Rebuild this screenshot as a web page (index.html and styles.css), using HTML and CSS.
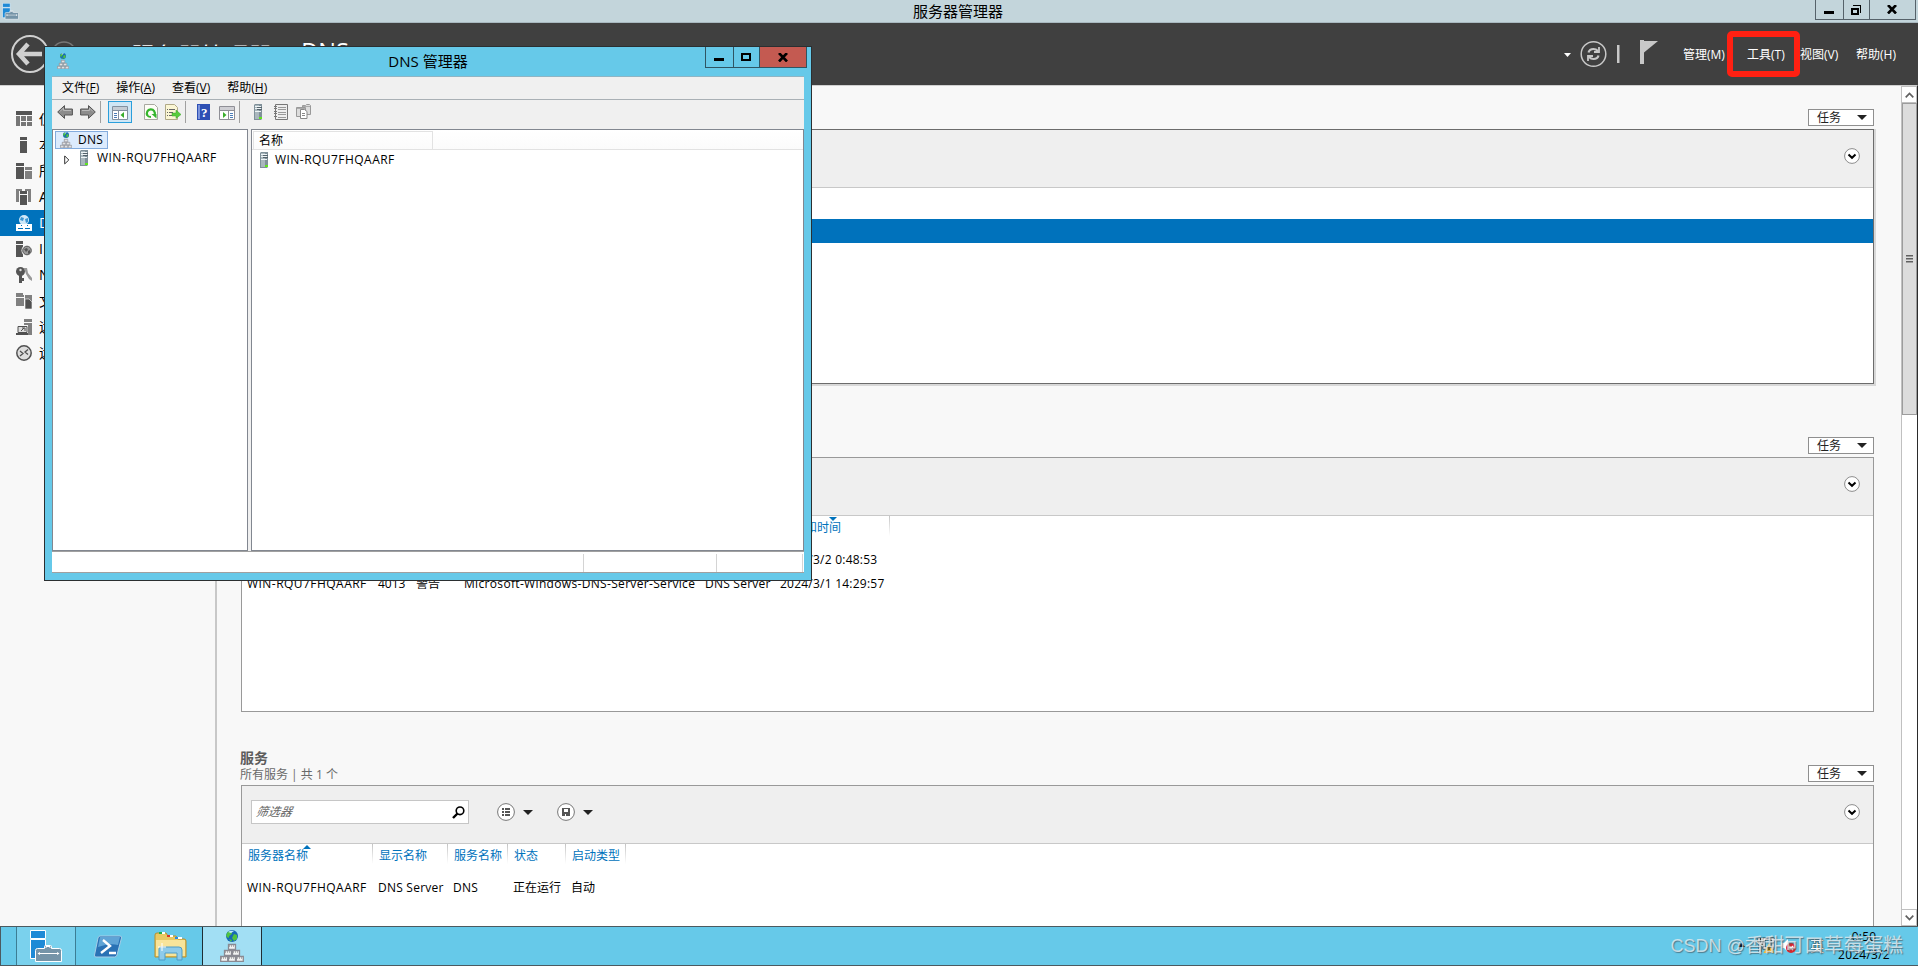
FILE: index.html
```
<!DOCTYPE html>
<html lang="zh-CN">
<head>
  <meta charset="UTF-8">
  <meta name="viewport" content="width=device-width, initial-scale=1.0">
  <link rel="stylesheet" href="styles.css">
  <title>服务器管理器</title>
</head>
<body>
  <!-- 公用图标 -->
  <svg class="defs" width="0" height="0">
    <symbol id="server" viewBox="0 0 9 16">
      <path d="M0 1 1 0h7v15l-1 1H0z" fill="#7f9099"/>
      <path d="M1 1h4v14H1z" fill="#a9b7bd"/>
      <path d="M1 2h6v1H1zM1 4h6v1H1zM1 7h6v1H1z" fill="#eef4f6"/>
      <path d="M3 3h5v1H3zM3 5h5v1H3z" fill="#54636c"/>
      <path d="M5 13h3v2H5z" fill="#5fe51c"/>
    </symbol>
    <symbol id="dns" viewBox="0 0 24 32">
      <circle cx="12" cy="6" r="6" fill="#1769b5"/>
      <path d="M7 3c3-3 5-2 5 0s-3 2-3 4-2 0-3-1zM14 4l3 1v4l-3 2-2-3zM9 9l3 1-1 2z" fill="#4fc33f"/>
      <path d="M8 2q3-2 6-1l-3 2z" fill="#bfe8ff"/>
      <g fill="#f2f2f2" stroke="#8a8a92" stroke-width="1.3">
        <path d="M8.500 14.500h7v5h-7zM4.500 20.500h7v5h-7zM12.500 20.500h7v5h-7zM.7 26.500h7v5h-7zM8.500 26.500h7v5h-7zM16.300 26.500h7v5h-7z"/>
      </g>
      <path d="M9 16h6M5 22h6M13 22h6M1 28h6M9 28h6M17 28h6" stroke="#777" stroke-dasharray="1 1"/>
    </symbol>
    <symbol id="arrow" viewBox="0 0 16 14">
      <path d="M.7 7 7.500.6v3.400H15.400v6H7.500v3.400z" fill="#8c8c8c" stroke="#555"/>
      <path d="M3 6.500 6.500 3v2.500H14" fill="none" stroke="#b9b9b9"/>
    </symbol>
    <symbol id="manager" viewBox="0 0 32 33">
      <path d="M.5.5h15v8H.5zM.5 9.500h15v19H.5z" fill="#1e8ad6" stroke="#fff"/>
      <path d="M5.500 20.500q0-2 2-2h7v-2q0-1 1-1h5q1 0 1 1v2h8q2 0 2 2v11h-26z" fill="#7594a8" stroke="#fff"/>
      <path d="M16 18v-1.500h4V18" fill="none" stroke="#fff"/>
      <path d="M8 23.500h21" stroke="#fff"/>
      <path d="M10 22l-2.500 1.500L10 25zM27 22l2.500 1.500L27 25z" fill="#fff"/>
    </symbol>
    <symbol id="chevron" viewBox="0 0 16 16">
      <circle cx="8" cy="8" r="7.400" fill="#fff" stroke="#8c8c8c"/>
      <path d="M4.500 6.500 8 9.800l3.500-3.300" fill="none" stroke="#000" stroke-width="2"/>
    </symbol>
  </svg>

  <div class="desktop">
    <!-- 标题栏 -->
    <div class="titlebar">
      <svg class="app-icon" width="17" height="17"><use href="#manager"/></svg>
      <div class="title">服务器管理器</div>
      <div class="caption">
        <div class="cap min"><svg width="10" height="10"><path d="M0 6h10v3H0z"/></svg></div>
        <div class="cap max"><svg width="10" height="10"><path d="M2 0h8v8H9V1H2zM0 3h8v7H0zm2 2v3h4V5z" fill-rule="evenodd"/></svg></div>
        <div class="cap close"><svg width="10" height="9"><path d="M1 0 9 8.500M9 0 1 8.500" stroke="#000" stroke-width="2.600"/></svg></div>
      </div>
    </div>

    <!-- 导航栏 -->
    <div class="navbar">
      <svg class="nav-arrows" width="70" height="40">
        <circle cx="20" cy="20" r="18" fill="none" stroke="#d0d0d0" stroke-width="2"/>
        <path d="M9 20h23M18 10 9 20l9 10" fill="none" stroke="#d0d0d0" stroke-width="4.500"/>
        <circle cx="54" cy="20" r="12" fill="none" stroke="#777" stroke-width="1.500"/>
      </svg>
      <h1>服务器管理器<span>· DNS</span></h1>
      <div class="nav-right">
        <svg width="100" height="40">
          <path d="M0 19h7l-3.500 4z" fill="#fff"/>
          <circle cx="29.500" cy="20" r="12.300" fill="none" stroke="#c8c8c8" stroke-width="1.500"/>
          <g fill="none" stroke="#c8c8c8" stroke-width="2.200">
            <path d="M24.500 18.500q1-3.500 5-3.500 2.500 0 4.500 2M34.500 21.500q-1 3.500-5 3.500-2.500 0-4.500-2"/>
            <path d="M35 13v5h-5M24 27v-5h5" stroke-width="1.800"/>
          </g>
          <path d="M53 11h2.500v18H53zM76 6h4v24h-4z" fill="#c8c8c8"/>
          <path d="M80 7h14L80 18.500z" fill="#c8c8c8"/>
        </svg>
        <span class="m1">管理(M)</span>
        <span class="m2">工具(T)</span>
        <span class="m3">视图(V)</span>
        <span class="m4">帮助(H)</span>
      </div>
    </div>

    <div class="body">
      <!-- 左侧菜单 -->
      <div class="sidebar">
        <div class="item"><svg width="16" height="16"><path d="M0 0h16v4H0z" fill="#555"/><path d="M0 5h4v10H0zM5 5h5v5H5zM11 5h5v5h-5zM5 11h5v4H5zM11 11h5v4h-5z" fill="#777"/></svg>仪表板</div>
        <div class="item"><svg width="16" height="16"><path d="M4 0h7v3H4zM4 4h7v12H4z" fill="#555"/></svg>本地服务器</div>
        <div class="item"><svg width="16" height="16"><path d="M0 0h8v3H0zM0 4h8v12H0z" fill="#555"/><path d="M9 4h7v3H9zM9 8h7v8H9z" fill="#808080"/></svg>所有服务器</div>
        <div class="item"><svg width="16" height="16"><path d="M0 0h6v2H3v11H0zM9 0h6v13h-3V2H9z" fill="#808080"/><path d="M4 2h7v3H4zM4 6h7v10H4z" fill="#555"/></svg>AD DS</div>
        <div class="item selected"><svg width="16" height="16"><circle cx="8" cy="5" r="5" fill="#cfe8f8"/><path d="M5 2l3 1-1 3-3-1zM9 4l3-1v4l-2 1z" fill="#3c96d2"/><path d="M0 9h16v7H0z" fill="#fff"/><path d="M2 13h5v1H2zM9 13h5v1H9zM5 10h1v1H5zM11 10h1v1h-1z" fill="#0070bb"/></svg>DNS</div>
        <div class="item"><svg width="16" height="16"><path d="M0 0h7v3H0zM0 4h7v12H0z" fill="#555"/><circle cx="11" cy="9.500" r="5.500" fill="#f8f8f8"/><circle cx="11" cy="9.500" r="4.300" fill="#999" stroke="#555"/><path d="M8 8l3-1 1 2-2 2zM12 10l2-1v3l-2 1z" fill="#555"/></svg>IIS</div>
        <div class="item"><svg width="16" height="16"><path d="M8 1h3l1 5 4 5v3l-3-2-3-5z" fill="#999"/><circle cx="4.500" cy="4.500" r="4.500" fill="#555"/><path d="M3 8h3v8H3zM6 11h2v3H6z" fill="#555"/><circle cx="4.500" cy="3" r="1.200" fill="#ddd"/></svg>NAP</div>
        <div class="item"><svg width="16" height="16"><path d="M0 0h7v2h1v2H0zM0 5h8v8H0zM9 2h7v12H9z" fill="#808080"/><path d="M9 6h4l3 3v7H9z" fill="#505050" stroke="#f8f8f8" stroke-width=".6"/></svg>文件和存储服务</div>
        <div class="item"><svg width="16" height="16"><path d="M8 0h8v3H8zM12 4h4v12h-4zM8 4h4v2H8z" fill="#808080"/><path d="M2 7.500h9v6H2z" fill="#ddd" stroke="#505050"/><path d="M0 14h12v2H0z" fill="#505050"/><path d="M5 12l3-3M6 9h3v3" stroke="#505050" fill="none"/></svg>远程访问</div>
        <div class="item"><svg width="16" height="16"><circle cx="8" cy="8" r="7.200" fill="#ddd" stroke="#505050" stroke-width="1.500"/><path d="M4 6l3 2.500L4 11M12 4.500 9 7l3 2.500" fill="none" stroke="#505050" stroke-width="1.300"/></svg>远程桌面服务</div>
      </div>

      <!-- 主内容 -->
      <div class="main">
        <div class="section first">
          <div class="head">
            <div class="names"></div>
            <div class="tasks">任务<i></i></div>
          </div>
          <div class="panel active">
            <div class="filter"><svg class="expand" width="16" height="16"><use href="#chevron"/></svg></div>
            <div class="thead"></div>
            <div class="trow picked"></div>
          </div>
        </div>

        <div class="section">
          <div class="head">
            <div class="names"></div>
            <div class="tasks">任务<i></i></div>
          </div>
          <div class="panel">
            <div class="filter"><svg class="expand" width="16" height="16"><use href="#chevron"/></svg></div>
            <div class="thead events">
              <span>服务器名称</span><span>ID</span><span>严重性</span><span>源</span><span>日志</span><span class="desc">日期和时间</span>
            </div>
            <div class="trow events">
              <span class="name">WIN-RQU7FHQAARF</span><span>4013</span><span>警告</span><span class="src">Microsoft-Windows-DNS-Server-Service</span><span class="log">DNS Server</span><span class="date">2024/3/2 0:48:53</span>
            </div>
            <div class="trow events">
              <span class="name">WIN-RQU7FHQAARF</span><span>4013</span><span>警告</span><span class="src">Microsoft-Windows-DNS-Server-Service</span><span class="log">DNS Server</span><span class="date">2024/3/1 14:29:57</span>
            </div>
          </div>
        </div>

        <div class="section">
          <div class="head">
            <div class="names"><h2>服务</h2><p>所有服务 | 共 1 个</p></div>
            <div class="tasks">任务<i></i></div>
          </div>
          <div class="panel">
            <div class="filter">
              <div class="search">
                <em>筛选器</em>
                <svg width="13" height="13"><circle cx="8" cy="4.800" r="3.800" fill="none" stroke="#000" stroke-width="1.600"/><path d="M5.500 7.500 1 12" stroke="#000" stroke-width="2.400"/></svg>
              </div>
              <div class="tool">
                <svg width="18" height="18"><circle cx="9" cy="9" r="8.400" fill="#fff" stroke="#777"/><path d="M5 5h2v2H5zM8 5h5v2H8zM5 8h2v2H5zM8 8h5v2H8zM5 11h2v2H5zM8 11h5v2H8z" fill="#555"/></svg>
                <i></i>
              </div>
              <div class="tool">
                <svg width="18" height="18"><circle cx="9" cy="9" r="8.400" fill="#fff" stroke="#777"/><path d="M5 5h8v8H5z" fill="#555"/><path d="M7 6h4v3H7zM8 11h1v2H8z" fill="#fff"/></svg>
                <i></i>
              </div>
              <svg class="expand" width="16" height="16"><use href="#chevron"/></svg>
            </div>
            <div class="thead services">
              <span class="asc">服务器名称</span><span>显示名称</span><span>服务名称</span><span>状态</span><span>启动类型</span>
            </div>
            <div class="trow services">
              <span class="name">WIN-RQU7FHQAARF</span><span class="log">DNS Server</span><span class="log">DNS</span><span>正在运行</span><span>自动</span>
            </div>
          </div>
        </div>
      </div>

      <!-- 滚动条 -->
      <div class="scrollbar">
        <div class="sb-btn"><svg width="9" height="6"><path d="M.7 5.300 4.500 1.500l3.800 3.800" fill="none" stroke="#606060" stroke-width="1.700"/></svg></div>
        <div class="thumb"><svg width="7" height="8"><path d="M0 0h7v1.500H0zM0 3h7v1.500H0zM0 6h7v1.500H0z" fill="#606060"/></svg></div>
        <div class="sb-btn down"><svg width="9" height="6"><path d="M.7.7 4.500 4.500 8.300.7" fill="none" stroke="#606060" stroke-width="1.700"/></svg></div>
      </div>
    </div>

    <!-- 任务栏 -->
    <div class="taskbar">
      <div class="task open"><svg width="32" height="33"><use href="#manager"/></svg></div>
      <div class="task">
        <svg width="28" height="23">
          <path d="M6 1h20q2 0 1.500 2L23 20q-.5 2-2.500 2H2Q0 22 .5 20L4 3q.5-2 2-2z" fill="#2a72b5" stroke="#a7cde6"/>
          <path d="M6 2h20l-2 8q-9-2-20 2z" fill="#5fa4d6"/>
          <path d="M9 5l7 6-9 7M15 18h7" fill="none" stroke="#fff" stroke-width="2.400"/>
        </svg>
      </div>
      <div class="task">
        <svg width="33" height="30">
          <path d="M1 4q0-2 2-2h9l2 3h8l2 3h6q2 0 2 2v16H1z" fill="#e9c963" stroke="#b98f2d"/>
          <path d="M5 1h6v2H5zM13 4h6v2h-6zM21 6h7v2h-7z" fill="#fff"/>
          <path d="M5 1h3v2H5z" fill="#1fb04a"/><path d="M13 4h3v2h-3z" fill="#d93a2b"/><path d="M21 6h3v2h-3z" fill="#2b8de0"/>
          <path d="M2 9h29v16H2z" fill="#f8e49a"/>
          <path d="M5 18q0-2 2-2h18q3 0 3 3v10h-5v-7H11v7H5z" fill="#8ecbea" stroke="#4d9cc8"/>
          <path d="M8 12v8M4 16h8" stroke="#fff"/>
        </svg>
      </div>
      <div class="task current"><svg width="24" height="32"><use href="#dns"/></svg></div>
      <div class="tray">
        <svg width="84" height="20">
          <path d="M0 11h7l-3.500-4z"/>
          <g fill="none" stroke="#333" stroke-width="3"><path d="M26 3h9v9h-9zM21 2v5h3V2M22 7v9"/></g>
          <g fill="none" stroke="#fff" stroke-width="1.500"><path d="M26 3h9v9h-9zM21 2v5h3V2M22 7v9"/></g>
          <path d="M31 7l5.500 10h-11z" fill="#f5b82a"/><path d="M30.500 10h1v4h-1zM30.500 15h1v1h-1z"/>
          <path d="M43 7h3l4-4v13l-4-4h-3z" fill="#fff"/>
          <circle cx="53" cy="12" r="5" fill="#d8262c"/><path d="M51 10l4 4M55 10l-4 4" stroke="#fff" stroke-width="1.500"/>
        </svg>
        <span class="ime">英</span>
        <div class="clock">0:50<br>2024/3/2</div>
      </div>
    </div>

    <!-- DNS 管理器窗口 -->
    <div class="dns-window">
      <div class="dns-title">
        <svg class="dns-icon" width="12" height="16"><use href="#dns"/></svg>
        <div class="title">DNS 管理器</div>
        <div class="caption">
          <div class="cap min"><svg width="10" height="10"><path d="M0 6h10v3H0z"/></svg></div>
          <div class="cap max"><svg width="10" height="8"><path d="M0 0h10v8H0zm2 2v4h6V2z" fill-rule="evenodd"/></svg></div>
          <div class="cap close"><svg width="10" height="9"><path d="M1 0 9 8.500M9 0 1 8.500" stroke="#000" stroke-width="2.600"/></svg></div>
        </div>
      </div>
      <div class="dns-body">
        <div class="menu">
          <span>文件(<u>F</u>)</span><span>操作(<u>A</u>)</span><span>查看(<u>V</u>)</span><span>帮助(<u>H</u>)</span>
        </div>
        <div class="toolbar">
          <svg width="16" height="14"><use href="#arrow"/></svg>
          <svg class="flip" width="16" height="14"><use href="#arrow"/></svg>
          <b></b>
          <div class="pressed">
            <svg width="16" height="14"><path d="M.5.500h15v13H.5z" fill="#fff" stroke="#8290a0"/><path d="M1 1h14v3H1z" fill="#c5ccd4"/><path d="M1 4h14v1H1zM6 5h1v8H6z" fill="#8290a0"/><path d="M2 7.500h3M2 9.500h3M2 11.500h3" stroke="#4b7db8"/><path d="M12 6v6L8.500 9z" fill="#3aae2c"/></svg>
          </div>
          <svg class="g1" width="14" height="16"><path d="M.5.500h10l3 3v12H.5z" fill="#fdfdf6" stroke="#a8a8a0"/><path d="M3.500 11.500a4 4 0 1 1 7-.5" fill="none" stroke="#35b52c" stroke-width="2.200"/><path d="M7.500 10h5v4.500z" fill="#35b52c"/><path d="M3 11q1 2 4 2" fill="none" stroke="#35b52c" stroke-width="1.800"/></svg>
          <svg class="g2" width="16" height="16"><path d="M.5.500h9l3 3v12H.5z" fill="#fbf6d4" stroke="#b0a987"/><path d="M2 5.500h1M4 5.500h6M2 8.500h1M4 8.500h4M2 11.500h1M4 11.500h4" stroke="#666"/><path d="M7 9h4V6l5 4.500-5 4V12H7z" fill="#58cc3c" stroke="#3ba526" stroke-width=".5"/></svg>
          <b class="b2"></b>
          <svg class="g3" width="13" height="16"><path d="M0 0h13v16H0z" fill="#2d4fb4"/><path d="M1 1h2v14H1z" fill="#7c94dc"/><text x="4" y="13" class="help">?</text></svg>
          <svg class="g4" width="16" height="14"><path d="M.5.500h15v13H.5z" fill="#fff" stroke="#8f8f96"/><path d="M1 1h14v3H1z" fill="#cfcfd4"/><path d="M1 4h14v1H1zM9 5h1v8H9z" fill="#8f8f96"/><path d="M11 7.500h3M11 9.500h3M11 11.500h3" stroke="#4b7db8"/><path d="M4 6v6l3.500-3z" fill="#3aae2c"/></svg>
          <b class="b3"></b>
          <svg class="g5" width="9" height="16"><use href="#server"/></svg>
          <svg class="g6" width="14" height="16"><path d="M1.500.500h12v15h-12z" fill="#eee" stroke="#777"/><path d="M4 3.500h8M4 5.500h8M4 8.500h8M4 10.500h8M4 13.500h8" stroke="#999"/><path d="M0 2.500h3M0 4.500h3M0 7.500h3M0 9.500h3M0 12.500h3" stroke="#777"/></svg>
          <svg class="g7" width="15" height="16"><path d="M6.500 1.500h3l1-1h3l1 1v9h-8zM.500 3.500h9v9h-9z" fill="#dcdcdc" stroke="#999"/><path d="M1 4.500h8M7 2.500h7" stroke="#aaa"/><path d="M4.500 5.500h4l2.500 2v7H4.500z" fill="#fff" stroke="#888"/><path d="M6 9.500h3M6 11.500h3" stroke="#888"/></svg>
        </div>
        <div class="panes">
          <div class="tree">
            <div class="node root"><svg width="12" height="16"><use href="#dns"/></svg>DNS</div>
            <div class="node child"><svg class="tri" width="6" height="10"><path d="M.7.900v8L4.800 5z" fill="#fff" stroke="#333"/></svg><svg width="9" height="16"><use href="#server"/></svg><span class="name">WIN-RQU7FHQAARF</span></div>
          </div>
          <div class="list">
            <div class="list-head"><div>名称</div></div>
            <div class="list-row"><svg width="9" height="16"><use href="#server"/></svg><span class="name">WIN-RQU7FHQAARF</span></div>
          </div>
        </div>
        <div class="status"><div></div><div></div><div></div></div>
      </div>
    </div>

    <div class="red-box"></div>
    <div class="watermark"><span>CSDN @</span>香甜可口草莓蛋糕</div>
  </div>
</body>
</html>
```
FILE: styles.css
```
* {
  box-sizing: border-box;
}

body {
  margin: 0;
  font-family: "Open Sans", "Noto Sans CJK SC", sans-serif;
  font-size: 12px;
  line-height: 16px;
  color: #000;
}

svg {
  display: block;
  flex: none;
}

.defs {
  position: absolute;
}

.desktop {
  position: relative;
  display: flex;
  flex-direction: column;
  width: 1918px;
  height: 966px;
  overflow: hidden;
  background: #f8f8f8;
  white-space: nowrap;
}

/* 西文字距 */
.name {
  letter-spacing: 0.46px;
}

.src {
  letter-spacing: 0.33px;
}

.log,
.date {
  letter-spacing: 0.23px;
}

/* 标题栏 */
.titlebar {
  display: grid;
  grid-template-columns: 103px 1fr 103px;
  height: 23px;
  background: #c3d5db;
  border-bottom: 1px solid #a9b9c0;
}

.app-icon {
  margin: 3px 0 0 2px;
}

.title {
  font-size: 15px;
  line-height: 22px;
  text-align: center;
}

.titlebar .title {
  padding-right: 2px;
}

.caption {
  display: flex;
}

.cap {
  display: flex;
  align-items: center;
  justify-content: center;
  height: 20px;
  padding-right: 1px;
  border: 1px solid #56626a;
  border-top: none;
  border-left: none;
}

.cap.min {
  width: 29px;
  border-left: 1px solid #56626a;
}

.cap.max {
  width: 26px;
}

.cap.close {
  width: 46px;
}

/* 导航栏 */
.navbar {
  display: flex;
  align-items: center;
  height: 62px;
  background: #404040;
  color: #fff;
}

.nav-arrows {
  margin-left: 10px;
}

h1 {
  display: flex;
  gap: 13px;
  margin: 0 auto 0 51px;
  padding-top: 3px;
  font-size: 23.5px;
  line-height: 30px;
  font-weight: normal;
}

h1 span {
  margin-top: -5px;
  word-spacing: 4px;
}

.nav-right {
  display: flex;
  align-items: center;
  width: 354px;
}

.nav-right span {
  padding-top: 1px;
}

.m1 {
  margin-left: 19px;
  width: 64px;
}

.m2 {
  width: 53px;
}

.m3 {
  width: 56px;
}

/* 主体 */
.body {
  display: flex;
  height: 841px;
  border-top: 1px solid #d0d0d0;
  border-right: 1px solid #2b2b2b;
}

.sidebar {
  width: 217px;
  padding-top: 20px;
  border-right: 2px solid #c8c8c8;
}

.item {
  display: flex;
  align-items: center;
  gap: 7px;
  height: 26px;
  padding-left: 16px;
  font-size: 14px;
}

.item.selected {
  background: #0072bc;
  color: #fff;
}

.main {
  flex: 1;
  padding: 0 27px 0 24px;
  overflow: hidden;
}

.head {
  display: flex;
  align-items: flex-end;
  justify-content: space-between;
  height: 73px;
  margin-left: -1px;
}

.first .head {
  height: 43px;
}

.names {
  padding-bottom: 2px;
  color: #6a6a6a;
}

h2 {
  margin: 0;
  font-size: 14px;
  line-height: 18px;
  color: #5c5c5c;
}

p {
  margin: 0;
  line-height: 16px;
}

.tasks {
  display: flex;
  align-items: center;
  justify-content: space-between;
  width: 66px;
  height: 17px;
  margin-bottom: 3px;
  padding: 0 6px 0 8px;
  border: 1px solid #8f8f8f;
  background: #fff;
  color: #222;
}

.tasks i,
.tool i {
  border: 5px solid transparent;
  border-top-color: #222;
  border-bottom: none;
}

.panel {
  height: 255px;
  border: 1px solid #999;
  background: #fff;
}

.panel.active {
  border-color: #6c6c6c;
  box-shadow: 1px 1px 0 1px #d8d8d8;
}

.filter {
  display: flex;
  align-items: center;
  height: 58px;
  padding: 0 13px 5px 9px;
  background: #efefef;
  border-bottom: 1px solid #c8c8c8;
}

.search {
  display: flex;
  align-items: center;
  justify-content: space-between;
  width: 218px;
  height: 24px;
  margin-right: 28px;
  padding: 0 3px 0 4px;
  border: 1px solid #c6c6c6;
  background: #fff;
  color: #666;
}

.search em {
  transform: skewX(-12deg);
}

.tool {
  display: flex;
  align-items: center;
  gap: 8px;
  width: 60px;
}

.expand {
  margin-left: auto;
}

.thead,
.trow {
  display: grid;
}

.thead {
  height: 32px;
  color: #0072bc;
}

.active .thead {
  height: 31px;
}

.trow {
  height: 24px;
  line-height: 24px;
}

.thead span {
  padding-left: 6px;
}

.trow span {
  padding-left: 5px;
}

/* 列分隔线向下渐隐 */
.thead span {
  position: relative;
  height: 20px;
  padding-top: 4px;
  background: linear-gradient(#c4c4c4, #fff) right / 1px 100% no-repeat;
}

.services {
  grid-template-columns: 131px 75px 60px 58px 60px;
}

.events {
  grid-template-columns: 131px 38px 48px 241px 75px 115px;
}

.asc::after,
.desc::after {
  content: "";
  position: absolute;
  top: 1px;
  left: 61px;
  border: 4px solid transparent;
  border-bottom-color: #0072bc;
  border-top: none;
}

.desc::after {
  left: 54px;
  border-top: 4px solid #0072bc;
  border-bottom: none;
}

.picked {
  background: #0072bc;
}

/* 滚动条 */
.scrollbar {
  display: flex;
  flex-direction: column;
  width: 16px;
  background: #fff;
  border-left: 1px solid #c0c0c0;
}

.sb-btn {
  display: flex;
  align-items: center;
  justify-content: center;
  height: 17px;
  border: 1px solid #c0c0c0;
  border-left: none;
}

.thumb {
  display: flex;
  align-items: center;
  justify-content: center;
  height: 312px;
  border: 1px solid #9c9c9c;
  background: #dcdcdc;
}

.sb-btn.down {
  margin-top: auto;
}

/* 任务栏 */
.taskbar {
  display: flex;
  height: 40px;
  padding-left: 15px;
  background: #66c9e9;
  border: 1px solid #4c5a60;
  border-right: none;
}

.task {
  display: flex;
  align-items: center;
  justify-content: center;
  width: 60px;
  margin-right: 2px;
}

.task.open {
  background: #7ad1ed;
  border: solid #3c7d94;
  border-width: 0 1px;
}

.task.current {
  background: #a2dff4;
  border: solid #1f2d33;
  border-width: 0 1px;
}

.tray {
  display: flex;
  align-items: center;
  margin-left: auto;
  padding-right: 26px;
}

.ime {
  width: 26px;
  margin-left: -12px;
  font-size: 14px;
  color: #fff;
  text-shadow: 0 0 2px #222, 0 0 1px #222;
}

.clock {
  width: 56px;
  text-align: center;
  line-height: 18px;
  letter-spacing: 0.25px;
}

/* DNS 管理器窗口 */
.dns-window {
  position: absolute;
  left: 44px;
  top: 46px;
  display: flex;
  flex-direction: column;
  width: 768px;
  height: 535px;
  padding: 0 7px 7px;
  border: 1px solid #2b2f31;
  background: #66c9e9;
}

.dns-title {
  display: grid;
  grid-template-columns: 99px 1fr 102px;
  height: 29px;
  margin-right: -3px;
}

.dns-icon {
  margin: 6px 0 0 5px;
}

.dns-title .title {
  line-height: 28px;
}

.dns-title .cap {
  height: 21px;
  border-color: #2f5563;
}

.dns-title .cap.close {
  width: 47px;
  background: #c45a51;
}

.dns-body {
  flex: 1;
  display: flex;
  flex-direction: column;
  background: #f0f0f0;
  border-top: 1px solid #8fb5c4;
}

.menu {
  display: flex;
  gap: 17px;
  height: 23px;
  padding: 3px 0 0 10px;
  border-bottom: 1px solid #a9b0b5;
}

.toolbar {
  display: flex;
  align-items: center;
  height: 29px;
  padding: 0 0 5px 5px;
}

.flip {
  margin-left: 7px;
  transform: scaleX(-1);
}

.toolbar b {
  width: 1px;
  height: 22px;
  margin: 0 7px 0 4px;
  background: #a0a0a0;
}

.pressed {
  display: flex;
  align-items: center;
  justify-content: center;
  width: 24px;
  height: 22px;
  padding-top: 2px;
  border: 1px solid #2a9fdc;
  background: #cfe6f5;
}

.g1 { margin-left: 12px; }
.g2 { margin-left: 7px; }
.toolbar .b2 { margin: 0 11px 0 4px; }
.g4 { margin: 2px 0 0 9px; }
.toolbar .b3 { margin: 0 14px 0 4px; }
.g6 { margin-left: 11px; }
.g7 { margin-left: 8px; }

.help {
  font: bold 13px "Liberation Serif", serif;
  fill: #fff;
}

.panes {
  flex: 1;
  display: flex;
  gap: 3px;
}

.tree,
.list {
  background: #fff;
  border: 1px solid #828790;
}

.tree {
  width: 196px;
  padding: 1px 2px;
}

.list {
  flex: 1;
}

.node {
  display: flex;
  align-items: center;
  height: 18px;
}

.root {
  width: 53px;
  gap: 6px;
  padding-left: 4px;
  letter-spacing: 0.3px;
  border: 1px solid #84acdd;
  background: #dcebfd;
}

.child {
  gap: 8px;
  padding-left: 9px;
}

.tri {
  margin: 3px 2px 0 0;
}

.list-head {
  height: 20px;
  padding: 1px 0 0 1px;
  background: linear-gradient(#fff, #fbfbfb);
  border-bottom: 1px solid #e2e2e2;
}

.list-head div {
  width: 180px;
  height: 18px;
  padding-left: 5px;
  line-height: 18px;
  border: 1px solid #e2e2e2;
  border-bottom: none;
}

.list-row {
  display: flex;
  align-items: center;
  gap: 6px;
  height: 20px;
  padding-left: 8px;
}

.status {
  display: flex;
  height: 22px;
  padding-top: 2px;
  background: #fff;
  border-top: 1px solid #a0a0a0;
  border-bottom: 1px solid #a0a0a0;
}

.status div {
  width: 86px;
  border-right: 1px solid #d4d4d4;
}

.status div:first-child {
  width: 532px;
}

.status div:nth-child(2) {
  width: 133px;
}

/* 标注与水印 */
.red-box {
  position: absolute;
  left: 1727px;
  top: 31px;
  width: 73px;
  height: 46px;
  border: 6px solid #ff2012;
  border-radius: 5px;
}

.watermark {
  position: absolute;
  right: 15px;
  top: 932px;
  font-family: "Liberation Sans", "Noto Sans CJK SC", sans-serif;
  font-size: 19.8px;
  line-height: 26px;
  color: rgba(235, 240, 242, 0.75);
  text-shadow: 1px 1px 1px rgba(70, 90, 100, 0.7);
}

.watermark span {
  font-size: 18px;
}
```
